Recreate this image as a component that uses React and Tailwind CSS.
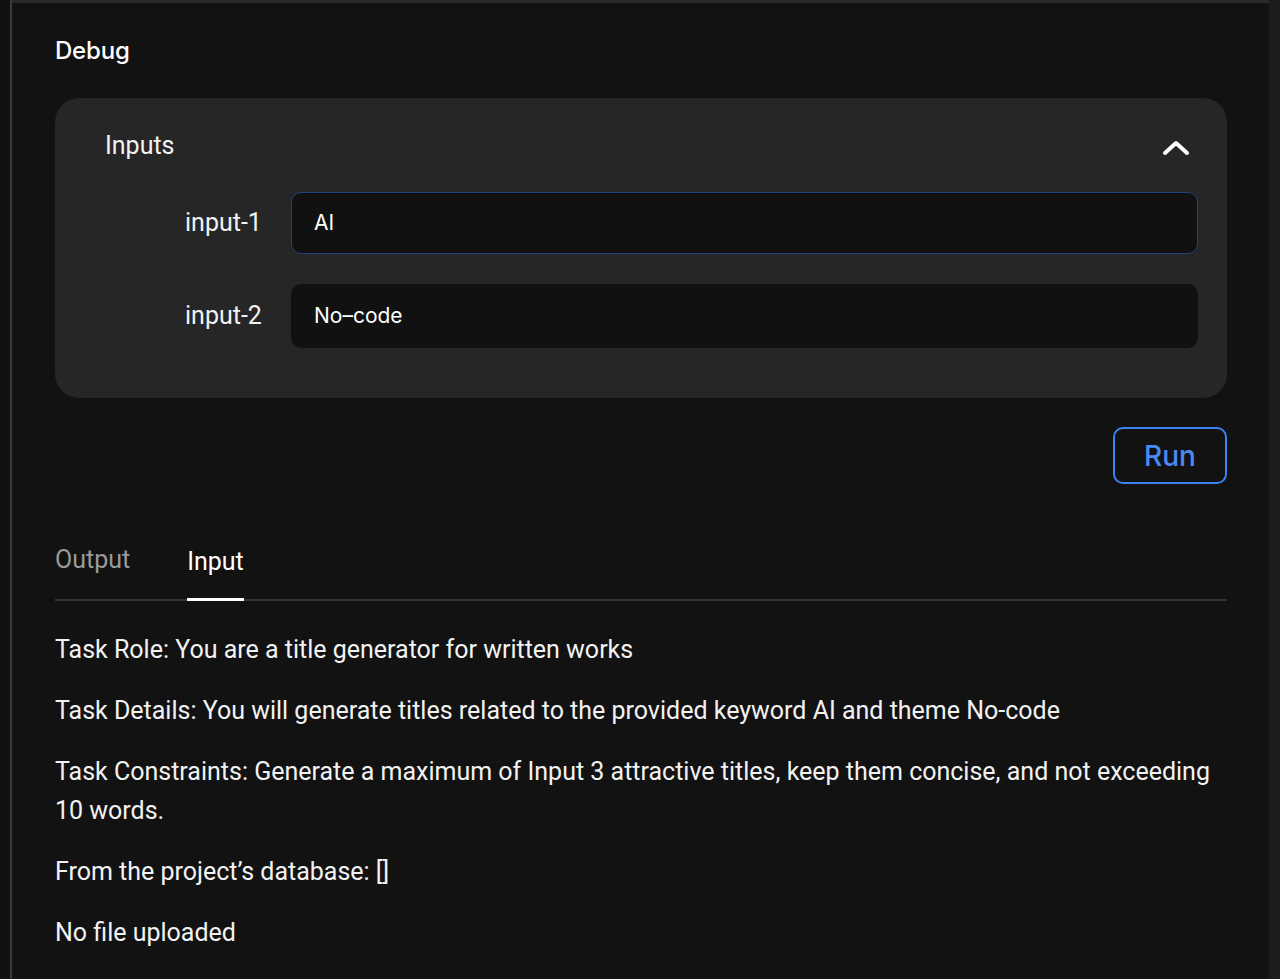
import React from "react";

export default function App() {
  return (
    <div className="w-[1280px] h-[979px] bg-[#111111] flex overflow-hidden">
      <div className="w-[10px] shrink-0 bg-[#111111]" />
      <div className="w-[2px] shrink-0 bg-[#3a3a3a]" />
      <div className="flex-1 flex flex-col bg-[#121212] border-t-[3px] border-[#2a2a2a] font-['Roboto',sans-serif] text-white">
        <div className="pl-[43px] pr-[42px] pt-[32px]">
          <h1 className="text-[24px] leading-[32px] font-medium font-['Inter',sans-serif] tracking-[-0.2px]">Debug</h1>
          <div className="mt-[31px] bg-[#262626] rounded-[24px] pt-[30px] pb-[50px] pl-[50px] pr-[29px]">
            <div className="flex items-center justify-between h-[36px]">
              <span className="text-[25px] text-[#f2f2f2]">Inputs</span>
              <svg width="30" height="20" viewBox="0 0 30 20" className="mr-[7px] mt-[4px]">
                <path d="M4 15 L15 5 L26 15" fill="none" stroke="white" strokeWidth="4" strokeLinecap="round" strokeLinejoin="round" />
              </svg>
            </div>
            <div className="mt-[28px] flex flex-col gap-[30px] pl-[80px]">
              <div className="flex items-center">
                <span className="w-[106px] text-[25px] text-[#f2f2f2]">input-1</span>
                <div className="flex-1 h-[62px] bg-[#111111] border-[1.5px] border-[#21427c] rounded-[10px] flex items-center pl-[22px] text-[21px] font-['Inter',sans-serif]">AI</div>
              </div>
              <div className="flex items-center">
                <span className="w-[106px] text-[25px] text-[#f2f2f2]">input-2</span>
                <div className="flex-1 h-[64px] bg-[#111111] rounded-[10px] flex items-center pl-[23px] text-[21px] font-['Inter',sans-serif]">No–code</div>
              </div>
            </div>
          </div>
          <div className="flex justify-end mt-[29px]">
            <button className="w-[114px] h-[57px] rounded-[10px] border-2 border-[#3b82f6] text-[#4a8af4] text-[28px] font-medium font-['Inter',sans-serif]">Run</button>
          </div>
          <div className="border-b-2 border-[#333333] flex gap-[57px] h-[117px] items-end">
            <div className="text-[25px] text-[#9a9a9a] pb-[23px] leading-[32px]">Output</div>
            <div className="text-[25px] text-white leading-[32px] pb-[20px] border-b-[3px] border-white mb-[-2px]">Input</div>
          </div>
          <div className="mt-[29px] text-[25px] leading-[39px] text-[#f2f2f2] flex flex-col gap-[22px]">
            <p>Task Role: You are a title generator for written works</p>
            <p>Task Details: You will generate titles related to the provided keyword AI and theme No-code</p>
            <p>Task Constraints: Generate a maximum of Input 3 attractive titles, keep them concise, and not exceeding 10 words.</p>
            <p>From the project’s database: []</p>
            <p>No file uploaded</p>
          </div>
        </div>
      </div>
      <div className="w-[11px] shrink-0 bg-[#1c1c1c]" />
    </div>
  );
}
